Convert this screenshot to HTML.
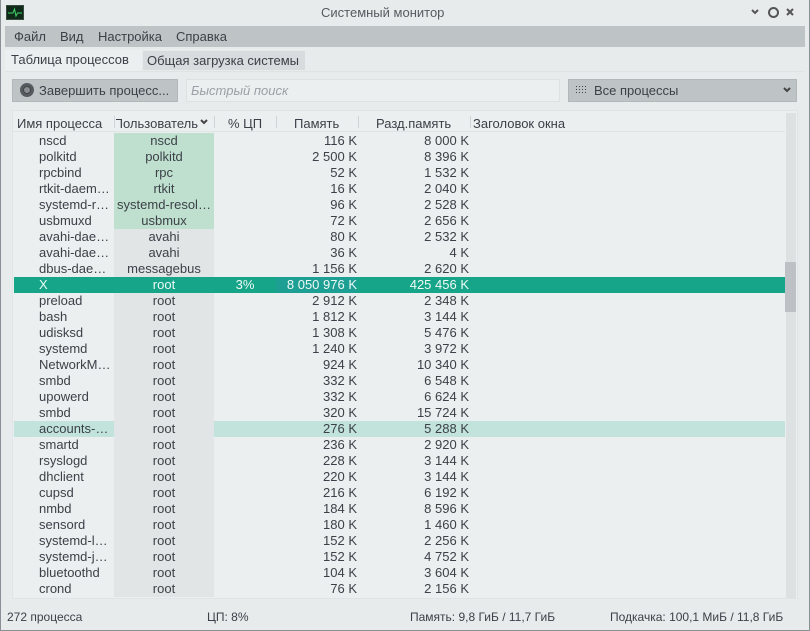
<!DOCTYPE html>
<html><head><meta charset="utf-8"><style>
*{margin:0;padding:0;box-sizing:border-box}
body{width:810px;height:631px;background:#e8ebec;font-family:"Liberation Sans","DejaVu Sans",sans-serif;font-size:13px;color:#3b4148;position:relative;overflow:hidden}
.a{position:absolute;white-space:nowrap}
.win{position:absolute;left:0;top:0;width:810px;height:631px;border:1px solid #8a9096;border-top:none}
.r{position:absolute;left:14px;width:771px;height:16px;line-height:16px}
.r span{position:absolute;top:0;height:16px}
.n{left:25px}
.u{left:100px;width:100px;text-align:center;background:#e2e5e6;overflow:hidden}
.c{left:200px;width:62px;text-align:center}
.m{left:262px;width:81px;text-align:right}
.s{left:344px;width:111px;text-align:right}
.g .u{background:#c0e0cf}
.sel{background:#17a589;color:#eef8f5}
.sel .u{background:transparent}
.sel .m{background:#1d9f93}
.hov{background:linear-gradient(to right,#c2e2dc 0,#c2e2dc 100px,transparent 100px,transparent 200px,#c2e2dc 200px)}
</style></head><body>
<div class="win"></div>
<div class="a" style="left:6px;top:5px;width:18px;height:15px;background:#0f2a18;border:1px solid #3b4a40">
<svg width="16" height="13" style="position:absolute;left:0;top:0"><path d="M1 7H6L7.5 3L9 10L10.5 7H15" stroke="#3fd36a" fill="none" stroke-width="1"/></svg></div>
<div class="a" style="left:321px;top:5px;font-size:13px;color:#555b61">Системный монитор</div>
<svg class="a" style="left:750px;top:8px" width="10" height="8"><path d="M2 2L5 5L8 2" stroke="#555" stroke-width="2" fill="none"/></svg>
<div class="a" style="left:768px;top:7px;width:11px;height:11px;border:2px solid #555;border-radius:50%"></div>
<svg class="a" style="left:785px;top:7px" width="10" height="10"><path d="M2 2L8 8M8 2L2 8" stroke="#555" stroke-width="2"/></svg>
<div class="a" style="left:5px;top:26px;width:800px;height:21px;background:#bec3c6"></div>
<div class="a" style="left:14px;top:29px;font-size:13px">Файл</div>
<div class="a" style="left:60px;top:29px;font-size:13px">Вид</div>
<div class="a" style="left:98px;top:29px;font-size:13px">Настройка</div>
<div class="a" style="left:176px;top:29px;font-size:13px">Справка</div>
<div class="a" style="left:5px;top:50px;width:137px;height:22px;background:#eceff0"></div>
<div class="a" style="left:11px;top:52px;font-size:13px">Таблица процессов</div>
<div class="a" style="left:143px;top:51px;width:162px;height:19px;background:#d8dcde"></div>
<div class="a" style="left:147px;top:53px;font-size:13px">Общая загрузка системы</div>
<div class="a" style="left:5px;top:71px;width:800px;height:1px;background:#dfe3e4"></div>
<div class="a" style="left:12px;top:79px;width:166px;height:23px;background:#bec3c6;border:1px solid #b2b7ba"></div>
<div class="a" style="left:20px;top:83px;width:14px;height:14px;border-radius:50%;background:#555b60"></div>
<div class="a" style="left:23px;top:86px;width:8px;height:8px;border-radius:50%;background:#888e92;border:1px solid #444"></div>
<div class="a" style="left:39px;top:83px;font-size:13px">Завершить процесс...</div>
<div class="a" style="left:186px;top:79px;width:374px;height:23px;border:1px solid #dde1e2;background:#eceff0"></div>
<div class="a" style="left:191px;top:83px;font-size:13px;font-style:italic;color:#9aa0a5">Быстрый поиск</div>
<div class="a" style="left:568px;top:79px;width:229px;height:23px;background:#bec3c6;border:1px solid #b2b7ba"></div>
<svg class="a" style="left:576px;top:86px" width="14" height="8"><g fill="#444"><rect x="0" y="0" width="1" height="1"/><rect x="3" y="0" width="1" height="1"/><rect x="6" y="0" width="1" height="1"/><rect x="9" y="0" width="1" height="1"/><rect x="0" y="3" width="1" height="1"/><rect x="3" y="3" width="1" height="1"/><rect x="6" y="3" width="1" height="1"/><rect x="9" y="3" width="1" height="1"/><rect x="0" y="6" width="1" height="1"/><rect x="3" y="6" width="1" height="1"/><rect x="6" y="6" width="1" height="1"/><rect x="9" y="6" width="1" height="1"/></g></svg>
<div class="a" style="left:594px;top:83px;font-size:13px">Все процессы</div>
<svg class="a" style="left:782px;top:87px" width="10" height="7"><path d="M2 1L5 4L8 1" stroke="#444" stroke-width="2" fill="none"/></svg>
<div class="a" style="left:12px;top:110px;width:786px;height:489px;background:#eceff0;border:1px solid #e0e4e5"></div>
<div class="a" style="left:13px;top:131px;width:772px;height:1px;background:#e0e4e5"></div>
<div class="a" style="left:786px;top:113px;width:10px;height:485px;background:#dde1e2"></div>
<div class="a" style="left:785px;top:262px;width:11px;height:50px;background:#bdc1c5"></div>
<div class="a" style="left:17px;top:116px">Имя процесса</div>
<div class="a" style="left:116px;top:116px;width:82px;overflow:hidden;direction:rtl">Пользователь</div>
<svg class="a" style="left:199px;top:119px" width="10" height="7"><path d="M2 1L5 4L8 1" stroke="#444" stroke-width="2" fill="none"/></svg>
<div class="a" style="left:228px;top:116px">% ЦП</div>
<div class="a" style="left:294px;top:116px">Память</div>
<div class="a" style="left:376px;top:116px">Разд.память</div>
<div class="a" style="left:473px;top:116px">Заголовок окна</div>
<div class="a" style="left:114px;top:116px;width:1px;height:12px;background:#d0d4d6"></div>
<div class="a" style="left:214px;top:116px;width:1px;height:12px;background:#d0d4d6"></div>
<div class="a" style="left:276px;top:116px;width:1px;height:12px;background:#d0d4d6"></div>
<div class="a" style="left:358px;top:116px;width:1px;height:12px;background:#d0d4d6"></div>
<div class="a" style="left:470px;top:116px;width:1px;height:12px;background:#d0d4d6"></div>

<div class="r g" style="top:133px"><span class="n">nscd</span><span class="u">nscd</span><span class="m">116 K</span><span class="s">8 000 K</span></div>
<div class="r g" style="top:149px"><span class="n">polkitd</span><span class="u">polkitd</span><span class="m">2 500 K</span><span class="s">8 396 K</span></div>
<div class="r g" style="top:165px"><span class="n">rpcbind</span><span class="u">rpc</span><span class="m">52 K</span><span class="s">1 532 K</span></div>
<div class="r g" style="top:181px"><span class="n">rtkit-daem…</span><span class="u">rtkit</span><span class="m">16 K</span><span class="s">2 040 K</span></div>
<div class="r g" style="top:197px"><span class="n">systemd-r…</span><span class="u">systemd-resol…</span><span class="m">96 K</span><span class="s">2 528 K</span></div>
<div class="r g" style="top:213px"><span class="n">usbmuxd</span><span class="u">usbmux</span><span class="m">72 K</span><span class="s">2 656 K</span></div>
<div class="r" style="top:229px"><span class="n">avahi-dae…</span><span class="u">avahi</span><span class="m">80 K</span><span class="s">2 532 K</span></div>
<div class="r" style="top:245px"><span class="n">avahi-dae…</span><span class="u">avahi</span><span class="m">36 K</span><span class="s">4 K</span></div>
<div class="r" style="top:261px"><span class="n">dbus-dae…</span><span class="u">messagebus</span><span class="m">1 156 K</span><span class="s">2 620 K</span></div>
<div class="r sel" style="top:277px"><span class="n">X</span><span class="u">root</span><span class="c">3%</span><span class="m">8 050 976 K</span><span class="s">425 456 K</span></div>
<div class="r" style="top:293px"><span class="n">preload</span><span class="u">root</span><span class="m">2 912 K</span><span class="s">2 348 K</span></div>
<div class="r" style="top:309px"><span class="n">bash</span><span class="u">root</span><span class="m">1 812 K</span><span class="s">3 144 K</span></div>
<div class="r" style="top:325px"><span class="n">udisksd</span><span class="u">root</span><span class="m">1 308 K</span><span class="s">5 476 K</span></div>
<div class="r" style="top:341px"><span class="n">systemd</span><span class="u">root</span><span class="m">1 240 K</span><span class="s">3 972 K</span></div>
<div class="r" style="top:357px"><span class="n">NetworkM…</span><span class="u">root</span><span class="m">924 K</span><span class="s">10 340 K</span></div>
<div class="r" style="top:373px"><span class="n">smbd</span><span class="u">root</span><span class="m">332 K</span><span class="s">6 548 K</span></div>
<div class="r" style="top:389px"><span class="n">upowerd</span><span class="u">root</span><span class="m">332 K</span><span class="s">6 624 K</span></div>
<div class="r" style="top:405px"><span class="n">smbd</span><span class="u">root</span><span class="m">320 K</span><span class="s">15 724 K</span></div>
<div class="r hov" style="top:421px"><span class="n">accounts-…</span><span class="u">root</span><span class="m">276 K</span><span class="s">5 288 K</span></div>
<div class="r" style="top:437px"><span class="n">smartd</span><span class="u">root</span><span class="m">236 K</span><span class="s">2 920 K</span></div>
<div class="r" style="top:453px"><span class="n">rsyslogd</span><span class="u">root</span><span class="m">228 K</span><span class="s">3 144 K</span></div>
<div class="r" style="top:469px"><span class="n">dhclient</span><span class="u">root</span><span class="m">220 K</span><span class="s">3 144 K</span></div>
<div class="r" style="top:485px"><span class="n">cupsd</span><span class="u">root</span><span class="m">216 K</span><span class="s">6 192 K</span></div>
<div class="r" style="top:501px"><span class="n">nmbd</span><span class="u">root</span><span class="m">184 K</span><span class="s">8 596 K</span></div>
<div class="r" style="top:517px"><span class="n">sensord</span><span class="u">root</span><span class="m">180 K</span><span class="s">1 460 K</span></div>
<div class="r" style="top:533px"><span class="n">systemd-l…</span><span class="u">root</span><span class="m">152 K</span><span class="s">2 256 K</span></div>
<div class="r" style="top:549px"><span class="n">systemd-j…</span><span class="u">root</span><span class="m">152 K</span><span class="s">4 752 K</span></div>
<div class="r" style="top:565px"><span class="n">bluetoothd</span><span class="u">root</span><span class="m">104 K</span><span class="s">3 604 K</span></div>
<div class="r" style="top:581px"><span class="n">crond</span><span class="u">root</span><span class="m">76 K</span><span class="s">2 156 K</span></div>
<div class="a" style="left:7px;top:610px;font-size:12px">272 процесса</div>
<div class="a" style="left:207px;top:610px;font-size:12px">ЦП: 8%</div>
<div class="a" style="left:410px;top:610px;font-size:12px">Память: 9,8 ГиБ / 11,7 ГиБ</div>
<div class="a" style="left:610px;top:610px;font-size:12px">Подкачка: 100,1 МиБ / 11,8 ГиБ</div>
</body></html>
